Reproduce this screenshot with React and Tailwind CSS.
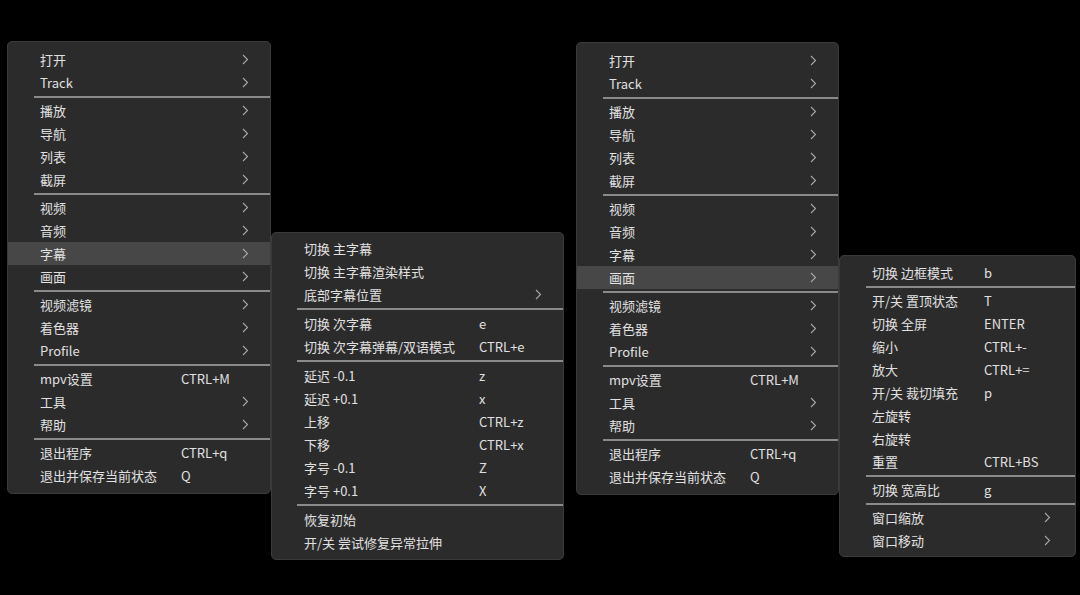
const mainItems = [
  { label: "打开", sub: true },
  { label: "Track", sub: true },
  { sep: true },
  { label: "播放", sub: true },
  { label: "导航", sub: true },
  { label: "列表", sub: true },
  { label: "截屏", sub: true },
  { sep: true },
  { label: "视频", sub: true },
  { label: "音频", sub: true },
  { label: "字幕", sub: true, key: "sub" },
  { label: "画面", sub: true, key: "view" },
  { sep: true },
  { label: "视频滤镜", sub: true },
  { label: "着色器", sub: true },
  { label: "Profile", sub: true },
  { sep: true },
  { label: "mpv设置", shortcut: "CTRL+M" },
  { label: "工具", sub: true },
  { label: "帮助", sub: true },
  { sep: true },
  { label: "退出程序", shortcut: "CTRL+q" },
  { label: "退出并保存当前状态", shortcut: "Q" },
]

const subtitleItems = [
  { label: "切换 主字幕" },
  { label: "切换 主字幕渲染样式" },
  { label: "底部字幕位置", sub: true },
  { sep: true },
  { label: "切换 次字幕", shortcut: "e" },
  { label: "切换 次字幕弹幕/双语模式", shortcut: "CTRL+e" },
  { sep: true },
  { label: "延迟 -0.1", shortcut: "z" },
  { label: "延迟 +0.1", shortcut: "x" },
  { label: "上移", shortcut: "CTRL+z" },
  { label: "下移", shortcut: "CTRL+x" },
  { label: "字号 -0.1", shortcut: "Z" },
  { label: "字号 +0.1", shortcut: "X" },
  { sep: true },
  { label: "恢复初始" },
  { label: "开/关 尝试修复异常拉伸" },
]

const viewItems = [
  { label: "切换 边框模式", shortcut: "b" },
  { sep: true },
  { label: "开/关 置顶状态", shortcut: "T" },
  { label: "切换 全屏", shortcut: "ENTER" },
  { label: "缩小", shortcut: "CTRL+-" },
  { label: "放大", shortcut: "CTRL+=" },
  { label: "开/关 裁切填充", shortcut: "p" },
  { label: "左旋转" },
  { label: "右旋转" },
  { label: "重置", shortcut: "CTRL+BS" },
  { sep: true },
  { label: "切换 宽高比", shortcut: "g" },
  { sep: true },
  { label: "窗口缩放", sub: true },
  { label: "窗口移动", sub: true },
]

function Chevron() {
  return (
    <svg width="7" height="11" viewBox="0 0 7 11" className="shrink-0">
      <path d="M1 1 L5.5 5.5 L1 10" fill="none" stroke="#a8a8a8" strokeWidth="1.1" />
    </svg>
  )
}

function Menu({ items, active, box, rowPad, labelW, sepMl, sepH = "h-[5px]" }) {
  return (
    <div className={`absolute rounded-[5px] border border-[#3b3b3b] bg-[#2b2b2b] ${box}`}>
      {items.map((it, i) =>
        it.sep ? (
          <div key={i} className={`flex items-center ${sepH} ${sepMl}`}>
            <div className="h-[2px] w-full bg-[#8a8a8a]" />
          </div>
        ) : (
          <div
            key={i}
            className={`flex h-[23px] items-center ${rowPad} ${it.key && it.key === active ? "bg-[#474747]" : ""}`}
          >
            <span className={`shrink-0 whitespace-nowrap ${labelW}`}>{it.label}</span>
            <span className="flex-1 whitespace-nowrap">{it.shortcut}</span>
            {it.sub && <Chevron />}
          </div>
        )
      )}
    </div>
  )
}

export default function App() {
  return (
    <div
      className="relative h-[595px] w-[1080px] overflow-hidden bg-black text-[13px] text-[#e0e0e0]"
      style={{ fontFamily: "'Noto Sans CJK SC', 'Noto Sans', sans-serif" }}
    >
      {/* 左侧：字幕子菜单 */}
      <Menu
        items={mainItems}
        active="sub"
        box="left-[7px] top-[41px] w-[264px] pt-[6px] pb-[6px]"
        rowPad="pl-[32px] pr-[21px]"
        labelW="w-[141px]"
        sepMl="ml-[26px]"
      />
      <Menu
        items={subtitleItems}
        box="left-[271px] top-[232px] w-[293px] pt-[4px] pb-[5px]"
        rowPad="pl-[32px] pr-[21px]"
        labelW="w-[175px]"
        sepMl="ml-[25px]"
        sepH="h-[6px]"
      />

      {/* 右侧：画面子菜单 */}
      <Menu
        items={mainItems}
        active="view"
        box="left-[576px] top-[42px] w-[263px] pt-[6px] pb-[6px]"
        rowPad="pl-[32px] pr-[21px]"
        labelW="w-[141px]"
        sepMl="ml-[26px]"
      />
      <Menu
        items={viewItems}
        box="left-[839px] top-[255px] w-[237px] pt-[5px] pb-[4px]"
        rowPad="pl-[32px] pr-[24px]"
        labelW="w-[112px]"
        sepMl="ml-[26px]"
      />
    </div>
  )
}
